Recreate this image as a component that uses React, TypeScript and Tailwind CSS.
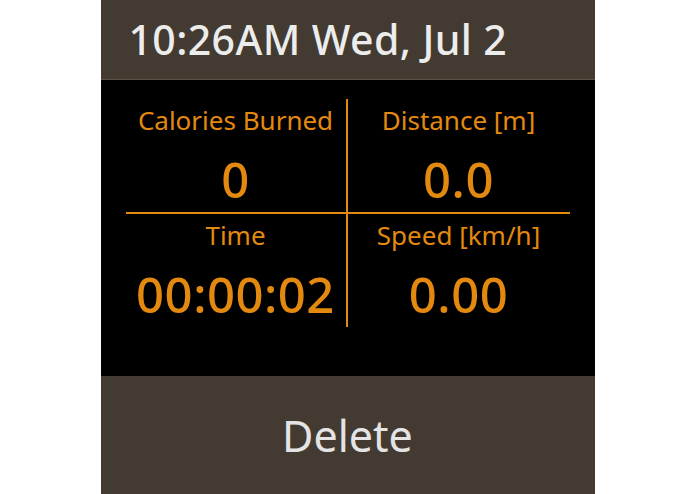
import React from 'react';

const stats = [
    { label: 'Calories Burned', value: '0' },
    { label: 'Distance [m]', value: '0.0' },
    { label: 'Time', value: '00:00:02' },
    { label: 'Speed [km/h]', value: '0.00' },
];

const App = () => {
    return (
        <div className="min-h-screen bg-white" style={{ fontFamily: '"Noto Sans", "Open Sans", sans-serif' }}>
            <div className="w-[494px] h-[494px] mx-auto flex flex-col bg-black">
                {/* Header */}
                <div className="h-[80px] bg-[#433a31] border-b border-[#5e5043] flex items-center pl-[28px]">
                    <span className="text-[41px] font-medium leading-none text-[#ececec] tracking-[0.4px]">10:26AM Wed, Jul 2</span>
                </div>

                {/* Stats grid */}
                <div className="flex-1 pt-[19px] px-[25px]">
                    <div className="grid grid-cols-2">
                        {stats.map((s, i) => (
                            <div
                                key={s.label}
                                className={
                                    'flex flex-col items-center ' +
                                    (i < 2 ? 'h-[115px] border-b-2 border-[#e3890f] ' : 'h-[113px] ') +
                                    (i % 2 === 0 ? 'border-r-2 border-[#e3890f]' : '')
                                }
                            >
                                <div className="mt-[4px] h-[34px] leading-[34px] text-[26px] text-[#e3890f]">{s.label}</div>
                                <div className="mt-[12px] h-[60px] leading-[60px] text-[49px] font-medium text-[#e3890f] tracking-[0.5px]">{s.value}</div>
                            </div>
                        ))}
                    </div>
                </div>

                {/* Delete button */}
                <button className="h-[118px] bg-[#433a31] flex items-center justify-center">
                    <span className="text-[43px] text-[#e4e4e4] leading-none">Delete</span>
                </button>
            </div>
        </div>
    );
};

export default App;
